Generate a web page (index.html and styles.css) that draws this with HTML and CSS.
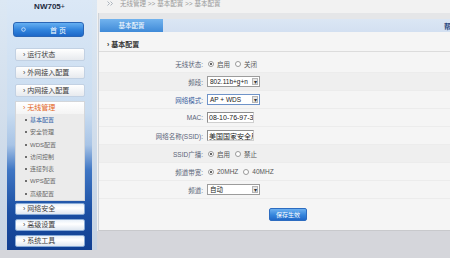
FILE: index.html
```html
<!DOCTYPE html>
<html lang="zh-CN">
<head>
  <meta charset="UTF-8">
  <title>NW705+ 无线管理</title>
  <link rel="stylesheet" href="styles.css">
</head>
<body>
  <div class="page">
    <div class="sidebar">
      <div class="side-col">
        <div class="brand">NW705<span class="plus">+</span></div>
        <div class="home-btn">
          <svg width="5" height="5" viewBox="0 0 10 10"><circle cx="5" cy="5" r="3.6" fill="none" stroke="#dbe9fb" stroke-width="1.6"/></svg>
          <span>首 页</span>
        </div>
        <ul class="menu">
          <li class="menu-item">› 运行状态</li>
          <li class="menu-item">› 外网接入配置</li>
          <li class="menu-item">› 内网接入配置</li>
        </ul>
        <div class="sub-panel">
          <div class="sub-title">› 无线管理</div>
          <ul class="sub-list">
            <li class="active">基本配置</li>
            <li>安全管理</li>
            <li>WDS配置</li>
            <li>访问控制</li>
            <li>连接列表</li>
            <li>WPS配置</li>
            <li>高级配置</li>
          </ul>
        </div>
        <ul class="menu menu-bottom">
          <li class="menu-item">› 网络安全</li>
          <li class="menu-item">› 高级设置</li>
          <li class="menu-item">› 系统工具</li>
        </ul>
      </div>
    </div>

    <div class="main">
      <div class="crumb">
        <svg width="7" height="5" viewBox="0 0 14 10"><path d="M1 1l4 4-4 4M7 1l4 4-4 4" fill="none" stroke="#9aa4b0" stroke-width="1.6"/></svg>
        <span>无线管理 &gt;&gt; 基本配置 &gt;&gt; 基本配置</span>
      </div>

      <div class="panel">
        <div class="tabbar">
          <div class="tab">基本配置</div>
          <span class="help">帮助</span>
        </div>

        <div class="section-title">› 基本配置</div>

        <div class="form">
          <div class="row">
            <label>无线状态:</label>
            <div class="val"><i class="radio on"></i>启用<i class="radio"></i>关闭</div>
          </div>
          <div class="row alt">
            <label>频段:</label>
            <div class="val"><span class="select">802.11b+g+n<b class="arrow">▾</b></span></div>
          </div>
          <div class="row">
            <label class="focus">网络模式:</label>
            <div class="val"><span class="select focus">AP + WDS<b class="arrow">▾</b></span></div>
          </div>
          <div class="row">
            <label>MAC:</label>
            <div class="val"><input class="input" type="text" value="08-10-76-97-3A-5C"></div>
          </div>
          <div class="row">
            <label>网络名称(SSID):</label>
            <div class="val"><input class="input" type="text" value="美国国家安全局"></div>
          </div>
          <div class="row alt">
            <label>SSID广播:</label>
            <div class="val"><i class="radio on"></i>启用<i class="radio"></i>禁止</div>
          </div>
          <div class="row">
            <label>频道带宽:</label>
            <div class="val"><i class="radio on"></i>20MHZ<i class="radio"></i>40MHZ</div>
          </div>
          <div class="row">
            <label>频道:</label>
            <div class="val"><span class="select">自动<b class="arrow">▾</b></span></div>
          </div>
        </div>

        <div class="actions">
          <button class="save">保存生效</button>
        </div>
      </div>
    </div>
  </div>
</body>
</html>
```

FILE: styles.css
```css
body {
  margin: 0;
  width: 450px;
  height: 258px;
  overflow: hidden;
  background-color: #d5d6db;
  font-family: "Liberation Sans", "Noto Sans CJK SC", sans-serif;
  color: #444;
}

ul {
  list-style: none;
  margin: 0;
  padding: 0;
}

.page {
  display: flex;
  align-items: flex-start;
}

/* left menu */
.sidebar {
  width: 97px;
  height: 250px;
  flex-shrink: 0;
  padding-left: 7px;
  box-sizing: border-box;
  background: linear-gradient(#dce8f4, #c6d3e3);
}

.side-col {
  width: 85px;
  height: 250px;
  background: linear-gradient(to bottom, #dbe8f6 0%, #c9dcf0 45%, #a8c4e6 58%, #3f76c4 68%, #1a4ea2 85%, #103f92 100%);
}

.brand {
  height: 22px;
  line-height: 14px;
  text-align: center;
  font-size: 8px;
  font-weight: bold;
  color: #1d2b3e;
}

.brand .plus {
  font-weight: normal;
  font-size: 7px;
}

.home-btn {
  margin-left: 6px;
  width: 71px;
  height: 15px;
  box-sizing: border-box;
  display: flex;
  align-items: center;
  padding-left: 7px;
  border: 1px solid #2a66b6;
  border-radius: 3px;
  background: linear-gradient(#66b0f2, #2f82dc 55%, #1d68c8);
  color: #fff;
  font-size: 7px;
}

.home-btn span {
  margin-left: 24px;
}

.menu {
  margin-top: 11px;
  margin-left: 8px;
  width: 70px;
  display: flex;
  flex-direction: column;
  gap: 5px;
}

.menu-item {
  height: 11px;
  line-height: 11px;
  padding-left: 7px;
  border: 1px solid #c2d1e3;
  border-radius: 2px;
  background: linear-gradient(#ffffff, #e7eaee);
  font-size: 7px;
  color: #3c3c3c;
}

.menu-bottom {
  margin-top: 2px;
  gap: 4px;
}

.menu-bottom .menu-item {
  height: 10px;
  line-height: 10px;
  border-color: #86a9d6;
  background: linear-gradient(#e8f0f9, #ffffff 40%, #dfe7f1);
}

.sub-panel {
  margin-top: 4px;
  margin-left: 8px;
  width: 70px;
  background-color: #ebebeb;
  border: 1px solid #d3d6da;
  box-sizing: border-box;
}

.sub-title {
  height: 12px;
  line-height: 12px;
  padding-left: 7px;
  background: linear-gradient(#ffffff, #f4f4f4);
  color: #e3641c;
  font-size: 7px;
}

.sub-list li {
  height: 12.3px;
  line-height: 12.3px;
  padding-left: 14px;
  font-size: 6px;
  color: #666;
  position: relative;
}

.sub-list li::before {
  content: "";
  position: absolute;
  left: 9px;
  top: 5px;
  width: 2px;
  height: 2px;
  border-radius: 50%;
  background-color: #444;
}

.sub-list li.active {
  color: #2d5ea6;
}

/* right side */
.main {
  flex: 1;
  height: 231px;
  display: flex;
  flex-direction: column;
  background-color: #f2f2f2;
}

.crumb {
  height: 13px;
  flex-shrink: 0;
  display: flex;
  align-items: flex-start;
  gap: 6px;
  padding-left: 10px;
  font-size: 6.5px;
  line-height: 8px;
  color: #9a9a9a;
}

.crumb svg {
  margin-top: 1px;
}

.panel {
  flex: 1;
  margin-left: 1px;
  border-left: 1px solid #cfd3d8;
  border-bottom: 1px solid #c8c9cc;
  background-color: #f5f5f5;
}

.tabbar {
  height: 13px;
  border-top: 6px solid #e5e6e8;
  background: linear-gradient(#dbe6f4, #d3e0f1);
  display: flex;
  align-items: center;
  overflow: hidden;
}

.tab {
  position: relative;
  margin-left: 1px;
  width: 63px;
  height: 13px;
  line-height: 13px;
  text-align: center;
  background: linear-gradient(#72b3ee, #3f8ad8);
  color: #fff;
  font-size: 6.5px;
}

.tab::after {
  content: "";
  position: absolute;
  left: 29px;
  top: 13px;
  border-left: 3px solid transparent;
  border-right: 3px solid transparent;
  border-top: 3px solid #3f8ad8;
}

.help {
  margin-left: auto;
  margin-right: -8px;
  font-size: 7px;
  font-weight: bold;
  color: #2a4a80;
}

.section-title {
  height: 13px;
  line-height: 13px;
  padding-top: 6px;
  padding-left: 8px;
  border-bottom: 1px solid #dcdcdc;
  font-size: 7px;
  font-weight: bold;
  color: #333;
}

.form {
  margin-top: 3px;
}

.row {
  display: grid;
  grid-template-columns: 105px 1fr;
  height: 18px;
  align-items: center;
  border-bottom: 1px solid #ececec;
  box-sizing: border-box;
}

.row.alt {
  background-color: #efefef;
}

.row label {
  text-align: right;
  padding-right: 1px;
  font-size: 6.5px;
  color: #5a6478;
}

.row label.focus {
  color: #3a5ea0;
}

.val {
  padding-left: 3px;
  display: flex;
  align-items: center;
  font-size: 6.5px;
  color: #555;
}

.radio {
  width: 4px;
  height: 4px;
  border: 1px solid #9a9a9a;
  border-radius: 50%;
  background-color: #fff;
  margin: 0 3px 0 1px;
  position: relative;
}

.val .radio:nth-of-type(2) {
  margin-left: 5px;
}

.radio.on::after {
  content: "";
  position: absolute;
  left: 1px;
  top: 1px;
  width: 2px;
  height: 2px;
  border-radius: 50%;
  background-color: #333;
}

.select {
  position: relative;
  width: 53px;
  height: 11px;
  line-height: 9px;
  box-sizing: border-box;
  padding-left: 2px;
  border: 1px solid #9c9c9c;
  background-color: #fff;
  font-size: 6.5px;
  color: #222;
}

.select.focus {
  border-color: #6f93c8;
}

.select .arrow {
  position: absolute;
  right: 1px;
  top: 1px;
  width: 6px;
  height: 7px;
  line-height: 7px;
  text-align: center;
  font-size: 6px;
  font-weight: normal;
  background-color: #e6e6e6;
  border: 1px solid #b5b5b5;
  box-sizing: border-box;
  color: #333;
}

.input {
  width: 47px;
  height: 11px;
  margin: 0;
  padding: 0 0 0 1px;
  box-sizing: border-box;
  border: 1px solid #8e8e8e;
  border-right-color: #cfcfcf;
  border-bottom-color: #cfcfcf;
  background-color: #fff;
  font-family: "Liberation Sans", "Noto Sans CJK SC", sans-serif;
  font-size: 7px;
  color: #222;
}

.actions {
  padding-top: 4px;
  padding-left: 170px;
}

.save {
  width: 38px;
  height: 13px;
  padding: 0;
  border: 1px solid #2d6cc0;
  border-radius: 2px;
  background: linear-gradient(#6db0f0, #3585dc 55%, #2168c8);
  color: #fff;
  font-family: "Liberation Sans", "Noto Sans CJK SC", sans-serif;
  font-size: 6px;
}
```
